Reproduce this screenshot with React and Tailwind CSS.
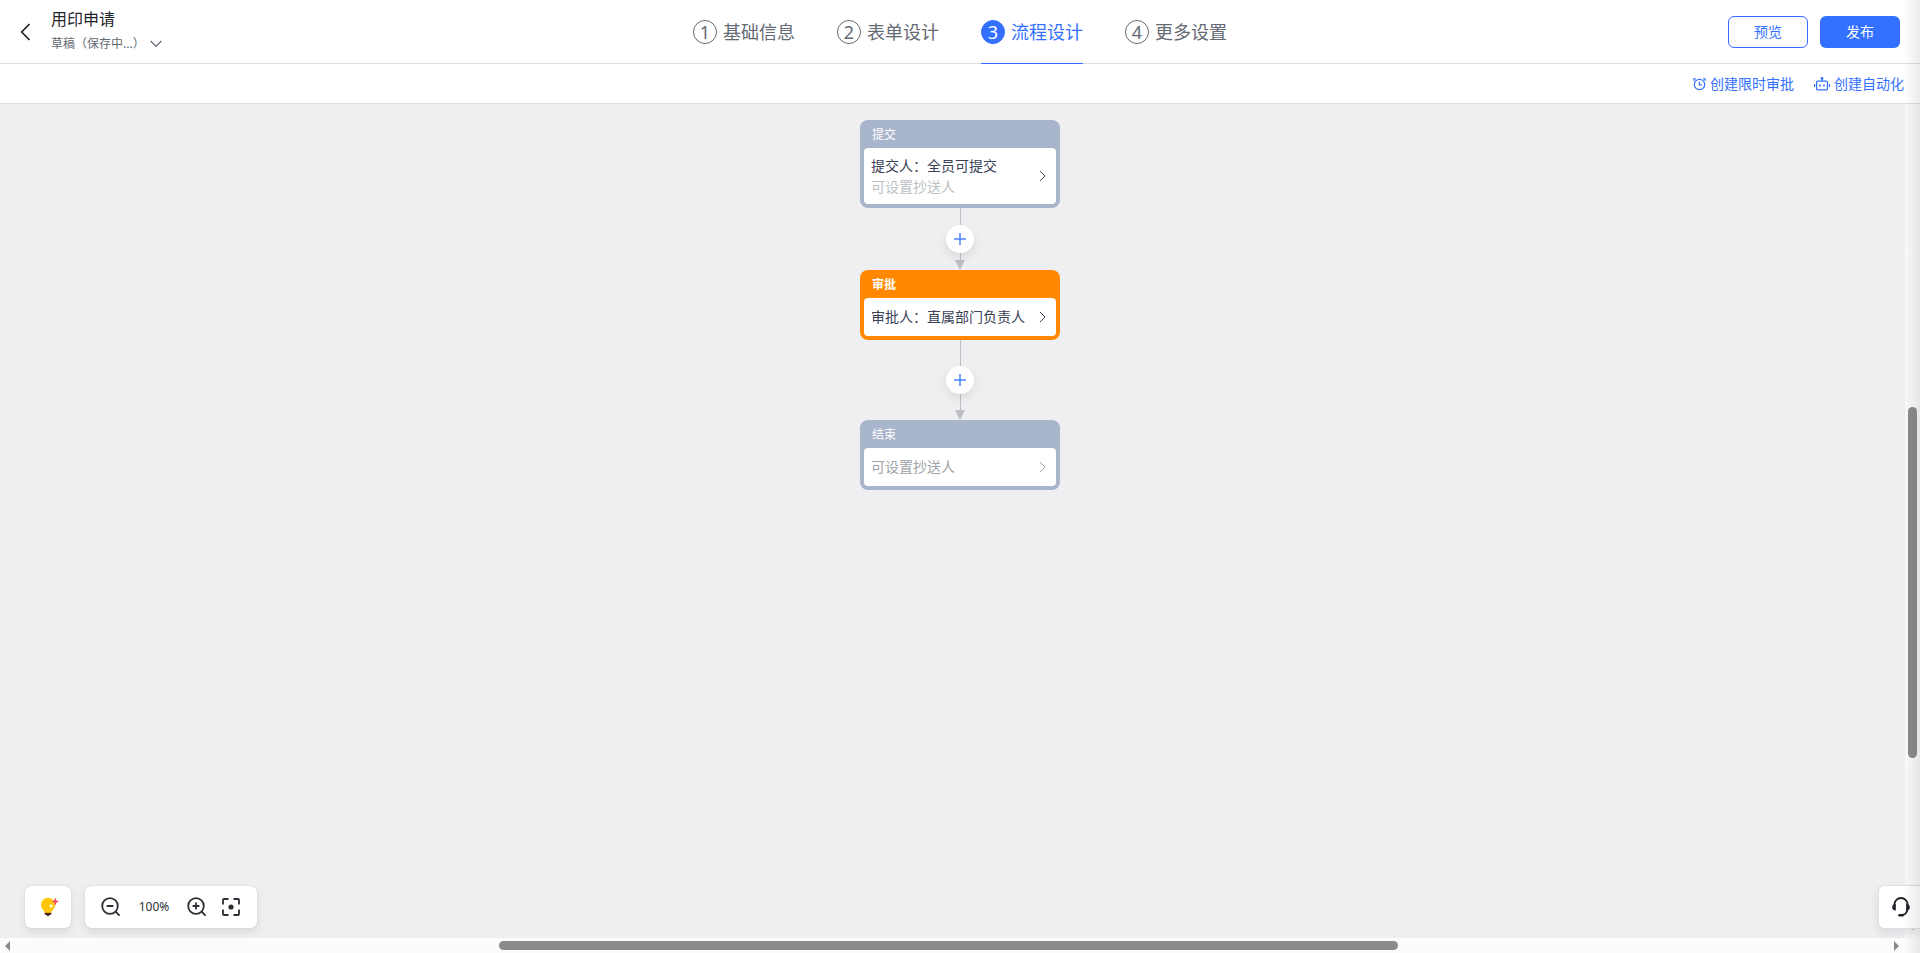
import React from 'react';
import clsx from 'clsx';

const steps = ['基础信息', '表单设计', '流程设计', '更多设置'];

function Chevron({ className }) {
  return (
    <svg className={className} width="7" height="12" viewBox="0 0 7 12" fill="none" stroke="currentColor" strokeWidth="1">
      <path d="M1 1l5 5-5 5" />
    </svg>
  );
}

function Header({ active }) {
  return (
    <header className="grid h-16 shrink-0 grid-cols-[1fr_auto_1fr] border-b border-[#dee0e3] bg-white">
      <div className="flex items-center pl-5">
        <button type="button" aria-label="返回" className="flex w-[31px] items-center text-[#1f2329]">
          <svg width="11" height="18" viewBox="0 0 11 18" fill="none" stroke="currentColor" strokeWidth="1.7">
            <path d="M9.5 1L1.7 9l7.8 8" />
          </svg>
        </button>
        <div className="flex flex-col gap-1 pb-[3px]">
          <h1 className="text-base leading-6 text-[#1f2329]">用印申请</h1>
          <button type="button" className="flex items-center gap-[5px] text-xs leading-[18px] text-[#646a73]">
            草稿（保存中...）
            <svg width="12" height="8" viewBox="0 0 12 8" fill="none" stroke="currentColor" strokeWidth="1.2">
              <path d="M.6 1L6 6.4 11.4 1" />
            </svg>
          </button>
        </div>
      </div>

      <nav className="flex gap-[42px]">
        {steps.map((label, i) => {
          const isActive = i + 1 === active;
          return (
            <button
              key={label}
              type="button"
              className={clsx(
                '-mb-px flex items-center gap-1.5 border-b text-lg leading-6',
                isActive ? 'border-[#3370ff] text-[#3370ff]' : 'border-transparent text-[#646a73]'
              )}
            >
              <span
                className={clsx(
                  'flex size-6 items-center justify-center rounded-full border',
                  isActive ? 'border-[#3370ff] bg-[#3370ff] text-white' : 'border-[#646a73]'
                )}
              >
                {i + 1}
              </span>
              {label}
            </button>
          );
        })}
      </nav>

      <div className="flex items-center justify-end gap-3 pr-5 text-sm">
        <button type="button" className="h-8 w-20 rounded-md border border-[#3370ff] bg-white text-[#3370ff]">预览</button>
        <button type="button" className="h-8 w-20 rounded-md bg-[#3370ff] text-white">发布</button>
      </div>
    </header>
  );
}

function Toolbar() {
  return (
    <div className="flex h-10 shrink-0 items-center justify-end gap-5 border-b border-[#dee0e3] bg-white pr-4 text-sm text-[#3370ff]">
      <button type="button" className="flex items-center gap-1">
        <svg width="14" height="14" viewBox="0 0 14 14" fill="none" stroke="currentColor" strokeWidth="1.2">
          <circle cx="7.5" cy="7.5" r="5.2" />
          <path d="M7.3 4.8v3h2.6M1.9 3.8V1.9h2M13.1 3.8V1.9h-2" />
        </svg>
        创建限时审批
      </button>
      <button type="button" className="flex items-center gap-1">
        <svg width="16" height="14" viewBox="0 0 16 14" fill="none" stroke="currentColor" strokeWidth="1.2">
          <rect x="2.6" y="4.1" width="10.8" height="8.8" rx="1" />
          <path d="M8 4V1.5M.6 7v3M15.4 7v3" />
          <circle cx="8" cy="1.4" r="1.4" fill="currentColor" stroke="none" />
          <path d="M5.2 8.5h1.6M9.2 8.5h1.6" strokeWidth="1.8" />
        </svg>
        创建自动化
      </button>
    </div>
  );
}

function FlowCard({ title, type, children, className }) {
  const isApproval = type === 'approval';
  return (
    <button
      type="button"
      className={clsx(
        'flex w-[200px] flex-col rounded-lg px-1 pb-1 text-left',
        isApproval ? 'bg-[#ff8800]' : 'bg-[#a9b4cd]'
      )}
    >
      <span className={clsx('h-7 px-2 text-xs leading-[30px] text-white', isApproval && 'font-bold')}>{title}</span>
      <span className={clsx('flex w-full items-center justify-between rounded bg-white pr-2.5 pl-[7px] text-sm', className)}>
        <span>{children}</span>
        <Chevron className="shrink-0" />
      </span>
    </button>
  );
}

function Connector({ className }) {
  return (
    <div className={clsx('grid justify-items-center', className)}>
      <div className="col-start-1 row-start-1 flex flex-col items-center">
        <span className="w-px flex-1 bg-[#bbbfc4]" />
        <svg width="10" height="10" viewBox="0 0 10 10" fill="#bbbfc4">
          <path d="M0 0h10L5 10z" />
        </svg>
      </div>
      <button
        type="button"
        aria-label="添加节点"
        className="col-start-1 row-start-1 flex size-7 items-center justify-center self-center rounded-full bg-white text-[#3370ff] shadow-[0_4px_10px_rgba(31,35,41,0.1)]"
      >
        <svg width="12" height="12" viewBox="0 0 12 12" fill="none" stroke="currentColor" strokeOpacity="0.65" strokeWidth="2">
          <path d="M6 0v12" />
          <path d="M0 6h12" />
        </svg>
      </button>
    </div>
  );
}

function ZoomIcon({ plus }) {
  return (
    <svg width="20" height="20" viewBox="0 0 20 20" fill="none" stroke="currentColor" strokeWidth="1.8">
      <circle cx="9" cy="9" r="7.8" />
      <path d="M14.6 14.6l4 4M5.6 9h6.8" />
      {plus && <path d="M9 5.6v6.8" />}
    </svg>
  );
}

function BottomTools() {
  const panel = 'flex h-[42px] items-center rounded-md bg-white shadow-[0_0_1px_rgba(31,35,41,0.3),0_4px_8px_rgba(31,35,41,0.1)]';
  return (
    <div className="absolute bottom-[25px] left-[25px] flex gap-3.5 text-[#2b2f36]">
      <button type="button" aria-label="提示" className={clsx(panel, 'w-[46px] justify-center pl-0.5')}>
        <svg width="20" height="20" viewBox="0 0 20 20">
          <path d="M9 .8a7 7 0 0 0-7 7c0 3 1.8 4.6 3.3 6.9h7.4C14.2 12.4 16 10.8 16 7.8a7 7 0 0 0-7-7z" fill="#ffc60a" />
          <path d="M12 6.5l.7 1.8 1.8.7-1.8.7-.7 1.8-.7-1.8-1.8-.7 1.8-.7z" fill="#fff" />
          <path d="M5.6 14.7h6.8V16H5.6z" fill="#f7a400" />
          <path d="M5.6 16h6.8v1.2l-1.7.9L9 19.6l-1.7-1.5-1.7-.9z" fill="#3f2a1d" />
          <path d="M16.4.5l1.1 2.9L20 4.500l-2.500 1.100-1.100 2.900-1.100-2.900-2.900-1.100 2.900-1.100z" fill="#f54a5e" />
        </svg>
      </button>
      <div className={clsx(panel, 'w-[172px] justify-between px-4')}>
        <button type="button" aria-label="缩小"><ZoomIcon /></button>
        <span className="text-xs">100%</span>
        <div className="flex gap-3.5">
          <button type="button" aria-label="放大"><ZoomIcon plus /></button>
          <button type="button" aria-label="适应画布">
            <svg width="20" height="20" viewBox="0 0 20 20" fill="none" stroke="currentColor" strokeWidth="1.8">
              <path d="M2 7.5V3q0-1 1-1h4.5M12.5 2H17q1 0 1 1v4.5M18 12.5V17q0 1-1 1h-4.5M7.5 18H3q-1 0-1-1v-4.5" />
              <circle cx="10" cy="10" r="2.6" fill="currentColor" stroke="none" />
            </svg>
          </button>
        </div>
      </div>
    </div>
  );
}

export default function App() {
  return (
    <div className="relative flex h-screen flex-col overflow-hidden bg-[#efeff1] font-['Noto_Sans','Noto_Sans_CJK_SC',sans-serif]">
      <Header active={3} />
      <Toolbar />

      <div className="grid min-h-0 flex-1 grid-cols-[1fr_15px] grid-rows-[1fr_15px]">
        <main className="flex flex-col items-center pt-4 pl-[15px]">
          <FlowCard title="提交" className="h-14 text-[#3b4257]">
            <span className="block leading-[21px]">提交人：全员可提交</span>
            <span className="block leading-[21px] text-[#bbbfc4]">可设置抄送人</span>
          </FlowCard>
          <Connector className="h-[62px]" />
          <FlowCard title="审批" type="approval" className="h-[38px] text-[#3b4257]">
            审批人：直属部门负责人
          </FlowCard>
          <Connector className="h-20" />
          <FlowCard title="结束" className="h-[38px] text-[#a0a3a9]">
            可设置抄送人
          </FlowCard>
        </main>

        {/* vertical scrollbar */}
        <div className="flex flex-col items-center bg-[#fafafa] pb-2 text-[#8b8b8b]">
          <span className="grow-[303]" />
          <span className="w-[9px] grow-[351] rounded-full bg-current" />
          <span className="grow-[167]" />
          <svg width="10" height="5" viewBox="0 0 10 5" fill="currentColor"><path d="M0 0h10L5 5z" /></svg>
        </div>

        {/* horizontal scrollbar */}
        <div className="col-span-2 flex items-center bg-[#fcfcfc] pr-[21px] pl-[5px] text-[#8b8b8b]">
          <svg width="5" height="10" viewBox="0 0 5 10" fill="currentColor"><path d="M5 0v10L0 5z" /></svg>
          <span className="grow-[489]" />
          <span className="h-[9px] grow-[899] rounded-full bg-current" />
          <span className="grow-[496]" />
          <svg width="5" height="10" viewBox="0 0 5 10" fill="currentColor"><path d="M0 0v10l5-5z" /></svg>
        </div>
      </div>

      <BottomTools />

      <button
        type="button"
        aria-label="客服"
        className="absolute right-0 bottom-6 flex h-11 w-[42px] items-center rounded-l-md border border-r-0 border-[#dee0e3] bg-white pl-[13px] text-[#1f2329] shadow-[0_4px_8px_rgba(31,35,41,0.1)]"
      >
        <svg width="18" height="20" viewBox="0 0 18 20" fill="none" stroke="currentColor" strokeWidth="1.8">
          <path d="M2.5 9V7.5a6.5 6.5 0 0 1 13 0V11c0 4-2 6.5-5 7" />
          <path d="M3.8 7v6.5C1.5 13.5.2 12.5.2 10.2S1.5 7 3.8 7zM14.2 7v6.5c2.3 0 3.6-1 3.6-3.3S16.5 7 14.2 7z" fill="currentColor" stroke="none" />
          <path d="M7.5 18.2h3" strokeWidth="2.6" strokeLinecap="round" />
        </svg>
      </button>

      {/* side panel shadow */}
      <div className="pointer-events-none absolute inset-y-0 right-0 w-4 bg-gradient-to-r from-transparent to-black/8" />
    </div>
  );
}
